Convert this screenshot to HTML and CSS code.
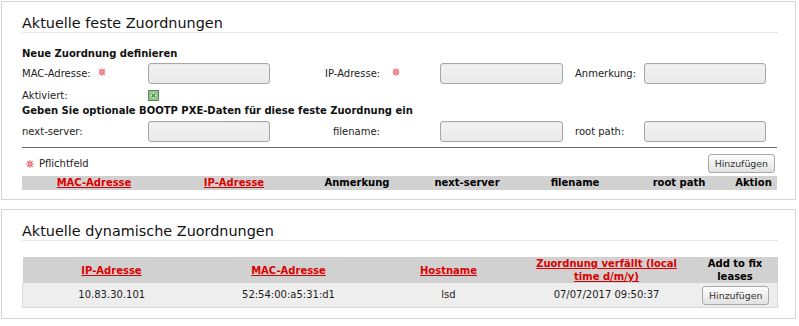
FILE: index.html
```html
<!DOCTYPE html>
<html lang="de">
<head>
<meta charset="utf-8">
<title>Zuordnungen</title>
<link rel="stylesheet" href="styles.css">
</head>
<body>
<div class="panel panel-first">
  <h2 class="title">Aktuelle feste Zuordnungen</h2>
  <h3 class="subhead">Neue Zuordnung definieren</h3>
  <div class="frow frow-input">
    <label class="lbl lbl-a">MAC-Adresse:<svg class="req req-mac" width="8" height="8" viewBox="0 0 8 8"><g stroke="#e8505a" stroke-width="1.2" stroke-linecap="round"><line x1="4" y1="0.8" x2="4" y2="7.2"/><line x1="0.8" y1="4" x2="7.2" y2="4"/><line x1="1.7" y1="1.7" x2="6.3" y2="6.3"/><line x1="6.3" y1="1.7" x2="1.7" y2="6.3"/></g><circle cx="4" cy="4" r="1" fill="#f6b0b4"/></svg></label>
    <input class="field" type="text">
    <label class="lbl lbl-b1">IP-Adresse:<svg class="req req-ip" width="8" height="8" viewBox="0 0 8 8"><g stroke="#e8505a" stroke-width="1.2" stroke-linecap="round"><line x1="4" y1="0.8" x2="4" y2="7.2"/><line x1="0.8" y1="4" x2="7.2" y2="4"/><line x1="1.7" y1="1.7" x2="6.3" y2="6.3"/><line x1="6.3" y1="1.7" x2="1.7" y2="6.3"/></g><circle cx="4" cy="4" r="1" fill="#f6b0b4"/></svg></label>
    <input class="field field-mid" type="text">
    <label class="lbl lbl-c">Anmerkung:</label>
    <input class="field" type="text">
  </div>
  <div class="frow frow-check">
    <label class="lbl lbl-a">Aktiviert:</label>
    <svg class="check" width="11" height="11" viewBox="0 0 11 11"><rect x="0.5" y="0.5" width="10" height="10" fill="#8fc48a" stroke="#5b8a55"/><rect x="2.5" y="2.5" width="6" height="6" fill="#f4f8f2" stroke="#7fb07a" stroke-width="0.6"/><g stroke="#3c8a36" stroke-width="1.2"><line x1="3.5" y1="3.5" x2="7.5" y2="7.5"/><line x1="7.5" y1="3.5" x2="3.5" y2="7.5"/></g></svg>
  </div>
  <h3 class="subhead subhead-pxe">Geben Sie optionale BOOTP PXE-Daten für diese feste Zuordnung ein</h3>
  <div class="frow frow-input frow-pxe">
    <label class="lbl lbl-a">next-server:</label>
    <input class="field" type="text">
    <label class="lbl lbl-b2">filename:</label>
    <input class="field field-mid" type="text">
    <label class="lbl lbl-c">root path:</label>
    <input class="field" type="text">
  </div>
  <div class="rule"></div>
  <div class="actions">
    <span class="legend"><svg class="req req-legend" width="8" height="8" viewBox="0 0 8 8"><g stroke="#e8505a" stroke-width="1.2" stroke-linecap="round"><line x1="4" y1="0.8" x2="4" y2="7.2"/><line x1="0.8" y1="4" x2="7.2" y2="4"/><line x1="1.7" y1="1.7" x2="6.3" y2="6.3"/><line x1="6.3" y1="1.7" x2="1.7" y2="6.3"/></g><circle cx="4" cy="4" r="1" fill="#f6b0b4"/></svg>Pflichtfeld</span>
    <button class="btn btn-add" type="button">Hinzufügen</button>
  </div>
  <table class="grid grid-fixed">
    <colgroup><col class="c1"><col class="c2"><col class="c3"><col class="c4"><col class="c5"><col class="c6"><col class="c7"></colgroup>
    <thead>
      <tr><th><a href="#">MAC-Adresse</a></th><th><a href="#">IP-Adresse</a></th><th>Anmerkung</th><th>next-server</th><th>filename</th><th>root path</th><th>Aktion</th></tr>
    </thead>
  </table>
</div>
<div class="panel panel-second">
  <h2 class="title">Aktuelle dynamische Zuordnungen</h2>
  <table class="grid grid-dyn">
    <colgroup><col class="d1"><col class="d2"><col class="d3"><col class="d4"><col class="d5"></colgroup>
    <thead>
      <tr><th><a href="#">IP-Adresse</a></th><th><a href="#">MAC-Adresse</a></th><th><a href="#">Hostname</a></th><th><a href="#">Zuordnung verfällt (local time d/m/y)</a></th><th>Add to fix leases</th></tr>
    </thead>
    <tbody>
      <tr><td>10.83.30.101</td><td>52:54:00:a5:31:d1</td><td>lsd</td><td>07/07/2017 09:50:37</td><td><button class="btn" type="button">Hinzufügen</button></td></tr>
    </tbody>
  </table>
</div>
</body>
</html>
```

FILE: styles.css
```css
html, body {
  margin: 0;
  padding: 0;
  background: #ffffff;
}
body {
  font-family: "DejaVu Sans", Verdana, sans-serif;
  font-size: 10px;
  color: #1c1c1c;
  width: 799px;
  overflow: hidden;
}
.panel {
  margin: 1px 3px 0 1px;
  border: 1px solid #d6d6d6;
  padding: 0 18px 9px 20px;
}
.panel-second {
  margin-top: 9px;
  padding-bottom: 10px;
}
.title {
  margin: 0;
  padding-top: 12px;
  font-size: 14.4px;
  font-weight: normal;
  line-height: 18px;
  color: #111;
  border-bottom: 1px dotted #d4d4d4;
}
.subhead {
  margin: 14px 0 0;
  font-size: 10px;
  line-height: 14px;
  font-weight: bold;
  color: #111;
}
.subhead-pxe {
  margin: 0;
  line-height: 12px;
}
.frow {
  display: flex;
  align-items: center;
}
.frow-input {
  margin-top: 1px;
  height: 23px;
}
.frow-pxe {
  margin-top: 1px;
  height: 26px;
}
.frow-check {
  margin-top: 1px;
  height: 19px;
}
.lbl {
  display: flex;
  align-items: center;
  line-height: 12px;
  padding-top: 1px;
  flex: none;
}
.lbl-a { width: 126px; }
.lbl-b1 { margin-left: 55px; width: 115px; }
.lbl-b2 { margin-left: 63px; width: 107px; }
.lbl-c { margin-left: 12px; width: 69px; }
.req {
  display: block;
  flex: none;
  position: relative;
  top: -2px;
}
.req-mac { margin-left: 7px; }
.req-ip { margin-left: 12px; }
.req-legend { margin: 0 5px 0 4px; top: 0; }
.field {
  box-sizing: border-box;
  flex: none;
  width: 122px;
  height: 21px;
  margin: 0;
  padding: 0 4px;
  border: 1px solid #a6a6a6;
  border-radius: 3px;
  background: linear-gradient(#f3f3f3, #e9e9e9);
  box-shadow: inset 0 1px 1px rgba(0,0,0,0.05);
}
.field-mid { width: 123px; }
.check { display: block; margin-top: 0; }
.rule {
  margin-top: 3px;
  height: 0;
  border-top: 1px solid #6a6a6a;
}
.actions {
  margin-top: 4px;
  height: 23px;
  display: flex;
  align-items: center;
  justify-content: space-between;
}
.legend {
  display: flex;
  align-items: center;
  line-height: 12px;
  padding-top: 1px;
}
.btn {
  box-sizing: border-box;
  height: 19px;
  margin: 0;
  padding: 0 6px;
  font-family: "DejaVu Sans", Verdana, sans-serif;
  font-size: 9.4px;
  color: #333;
  border: 1px solid #a9a9a9;
  border-radius: 3px;
  background: linear-gradient(#fdfdfd, #e2e2e2);
  line-height: 17px;
}
.btn-add { margin-right: 2px; }
.grid {
  width: 100%;
  border-collapse: collapse;
  table-layout: fixed;
  margin-top: 1px;
}
.grid th {
  background: #d1d1d1;
  font-weight: bold;
  color: #000;
  padding: 0 4px;
  text-align: center;
  line-height: 14px;
}
.grid a {
  color: #dc0000;
  text-decoration: underline;
}
.c1 { width: 144px; }
.c2 { width: 136px; }
.c3 { width: 110px; }
.c4 { width: 110px; }
.c5 { width: 106px; }
.c6 { width: 102px; }
.c7 { width: 47px; }
.grid-dyn {
  margin-top: 16px;
}
.grid-dyn th {
  height: 26px;
  line-height: 13px;
  padding: 0 3px;
}
.d1 { width: 178px; }
.d2 { width: 176px; }
.d3 { width: 144px; }
.d4 { width: 172px; }
.d5 { width: 85px; }
.grid-dyn td {
  background: #eeeeee;
  text-align: center;
  height: 24px;
  padding: 0;
  border-bottom: 1px solid #d8d8d8;
  line-height: 12px;
}
.grid-dyn td:first-child { border-left: 1px solid #dedede; }
.grid-dyn td:last-child { border-right: 1px solid #d8d8d8; }
.grid-dyn td .btn { margin-left: 2px; }
```
